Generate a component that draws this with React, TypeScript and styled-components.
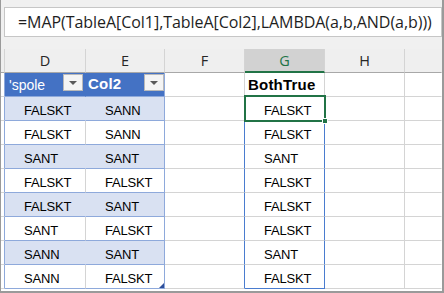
import React from 'react';
import styled, { createGlobalStyle } from 'styled-components';

const Global = createGlobalStyle`
  html, body { margin: 0; padding: 0; background: #fff; }
  body { width: 444px; height: 293px; overflow: hidden; }
`;

const GRID = '#d4d4d4';
const TABLE_LINE = '#8ea9db';
const TABLE_HEAD = '#4472c4';
const BAND = '#d9e1f2';
const SPILL = '#4a7ccf';
const GREEN = '#217346';

const Frame = styled.div`
  width: 444px;
  height: 293px;
  box-sizing: border-box;
  border-left: 1px solid #9a9a9a;
  border-right: 2px solid #9a9a9a;
  border-bottom: 2px solid #9a9a9a;
  background: #fff;
  display: flex;
  flex-direction: column;
  overflow: hidden;
`;

const FormulaArea = styled.div`
  background: #f0f0f0;
  padding: 7px 0 12px 3px;
`;

const FormulaBox = styled.div`
  height: 30px;
  box-sizing: border-box;
  border: 1px solid #c6c6c6;
  background: #fff;
  display: flex;
  align-items: center;
  padding-left: 13px;
  font-family: "Open Sans", "Noto Sans", sans-serif;
  font-size: 16px;
  letter-spacing: -0.05px;
  color: #1e1e1e;
  white-space: nowrap;
`;

const Sheet = styled.div`
  display: flex;
  flex-direction: column;
`;

const Row = styled.div`
  display: flex;
  height: 24px;
`;

type CellProps = { $w?: number; $bg?: string; $r?: string; $b?: string; $bw?: number };

const Cell = styled.div<CellProps>`
  position: relative;
  box-sizing: border-box;
  height: 24px;
  ${p => (p.$w ? `width:${p.$w}px; flex:none;` : 'flex:1;')}
  background: ${p => p.$bg ?? '#fff'};
  border-right: 1px solid ${p => p.$r ?? GRID};
  border-bottom: ${p => p.$bw ?? 1}px solid ${p => p.$b ?? GRID};
  overflow: visible;
`;

const ColHead = styled(Cell)<{ $active?: boolean }>`
  display: flex;
  align-items: center;
  justify-content: center;
  font-family: "Open Sans", "Noto Sans", sans-serif;
  font-size: 14.5px;
  color: ${p => (p.$active ? GREEN : '#262626')};
`;

const DataCell = styled(Cell)`
  font-family: "Liberation Sans", Arial, sans-serif;
  font-size: 13px;
  letter-spacing: -0.2px;
  line-height: 20px;
  padding-top: 4px;
  padding-left: 19px;
  color: #000;
  white-space: nowrap;
`;

const HeadCell = styled(Cell)`
  display: flex;
  align-items: flex-start;
  font-family: "Liberation Sans", Arial, sans-serif;
  white-space: nowrap;
`;

const HeadText = styled.span<{ $bold?: boolean; $size: number; $pl: number; $pt: number; $color: string }>`
  font-size: ${p => p.$size}px;
  font-weight: ${p => (p.$bold ? 700 : 400)};
  line-height: 20px;
  padding-left: ${p => p.$pl}px;
  padding-top: ${p => p.$pt}px;
  color: ${p => p.$color};
  letter-spacing: ${p => (p.$bold ? '0.2px' : '0')};
`;

const DropButton = styled.div<{ $mr: number }>`
  margin-left: auto;
  margin-right: ${p => p.$mr}px;
  margin-top: 1px;
  width: 20px;
  height: 17px;
  box-sizing: border-box;
  background: #f4f4f4;
  border: 1px solid #b9b9b9;
  display: flex;
  align-items: center;
  justify-content: center;
  &::after {
    content: '';
    width: 0;
    height: 0;
    border-left: 4px solid transparent;
    border-right: 4px solid transparent;
    border-top: 4px solid #5a5a5a;
    margin-top: 1px;
  }
`;

const ActiveBox = styled.div`
  position: absolute;
  left: -1px;
  top: -2px;
  width: 82px;
  height: 27px;
  box-sizing: border-box;
  border: 2px solid ${GREEN};
  pointer-events: none;
  z-index: 2;
`;

const FillHandle = styled.div`
  position: absolute;
  left: 77px;
  top: 21px;
  width: 6px;
  height: 6px;
  background: ${GREEN};
  border: 1px solid #fff;
  box-sizing: border-box;
  z-index: 3;
`;

const ResizeHandle = styled.div`
  position: absolute;
  right: 0px;
  bottom: 0px;
  width: 0;
  height: 0;
  border-left: 5px solid transparent;
  border-bottom: 5px solid #2f4f9a;
`;

const WIDTHS = { gutter: 4, D: 81, E: 79, F: 80, G: 80, H: 80 };

const rows: [string, string, string][] = [
  ['FALSKT', 'SANN', 'FALSKT'],
  ['FALSKT', 'SANN', 'FALSKT'],
  ['SANT', 'SANT', 'SANT'],
  ['FALSKT', 'FALSKT', 'FALSKT'],
  ['FALSKT', 'SANT', 'FALSKT'],
  ['SANT', 'FALSKT', 'FALSKT'],
  ['SANN', 'SANT', 'SANT'],
  ['SANN', 'FALSKT', 'FALSKT'],
];

const headers: { key: string; w?: number; active?: boolean }[] = [
  { key: 'D', w: WIDTHS.D },
  { key: 'E', w: WIDTHS.E },
  { key: 'F', w: WIDTHS.F },
  { key: 'G', w: WIDTHS.G, active: true },
  { key: 'H', w: WIDTHS.H },
  { key: '' },
];

export default function App() {
  return (
    <>
      <Global />
      <Frame>
        <FormulaArea>
          <FormulaBox>=MAP(TableA[Col1],TableA[Col2],LAMBDA(a,b,AND(a,b)))</FormulaBox>
        </FormulaArea>
        <Sheet>
          <Row>
            <Cell $w={WIDTHS.gutter} $bg="#efefef" $r={GRID} $b="#a8a8a8" />
            {headers.map(h => (
              <ColHead
                key={h.key || 'I'}
                $w={h.w}
                $active={h.active}
                $bg={h.active ? '#d2d2d2' : '#efefef'}
                $r={h.key ? GRID : 'transparent'}
                $b={h.active ? GREEN : '#a8a8a8'}
                $bw={h.active ? 2 : 1}
              >
                {h.key}
              </ColHead>
            ))}
          </Row>
          <Row>
            <Cell $w={WIDTHS.gutter} $r={TABLE_LINE} />
            <HeadCell $w={WIDTHS.D} $bg={TABLE_HEAD} $r={TABLE_HEAD} $b={TABLE_LINE}>
              <HeadText $size={14} $pl={4} $pt={2} $color="#fff">'spole</HeadText>
              <DropButton $mr={2} />
            </HeadCell>
            <HeadCell $w={WIDTHS.E} $bg={TABLE_HEAD} $r={TABLE_LINE} $b={TABLE_LINE}>
              <HeadText $bold $size={15} $pl={2} $pt={1} $color="#fff">Col2</HeadText>
              <DropButton $mr={0} />
            </HeadCell>
            <Cell $w={WIDTHS.F} />
            <HeadCell $w={WIDTHS.G}>
              <HeadText $bold $size={15} $pl={3} $pt={2} $color="#000">BothTrue</HeadText>
            </HeadCell>
            <Cell $w={WIDTHS.H} />
            <Cell $r="transparent" />
          </Row>
          {rows.map((r, i) => {
            const banded = i % 2 === 0;
            const bg = banded ? BAND : '#fff';
            const last = i === rows.length - 1;
            return (
              <Row key={i}>
                <Cell $w={WIDTHS.gutter} $r={TABLE_LINE} />
                <DataCell $w={WIDTHS.D} $bg={bg} $r={banded ? BAND : GRID} $b={TABLE_LINE}>
                  {r[0]}
                </DataCell>
                <DataCell $w={WIDTHS.E} $bg={bg} $r={TABLE_LINE} $b={TABLE_LINE}>
                  {r[1]}
                  {last && <ResizeHandle />}
                </DataCell>
                <Cell $w={WIDTHS.F} $r={i === 0 ? GRID : SPILL} />
                <DataCell $w={WIDTHS.G} $r={SPILL} $b={last ? SPILL : GRID}>
                  {r[2]}
                  {i === 0 && (
                    <>
                      <ActiveBox />
                      <FillHandle />
                    </>
                  )}
                </DataCell>
                <Cell $w={WIDTHS.H} />
                <Cell $r="transparent" />
              </Row>
            );
          })}
        </Sheet>
      </Frame>
    </>
  );
}
